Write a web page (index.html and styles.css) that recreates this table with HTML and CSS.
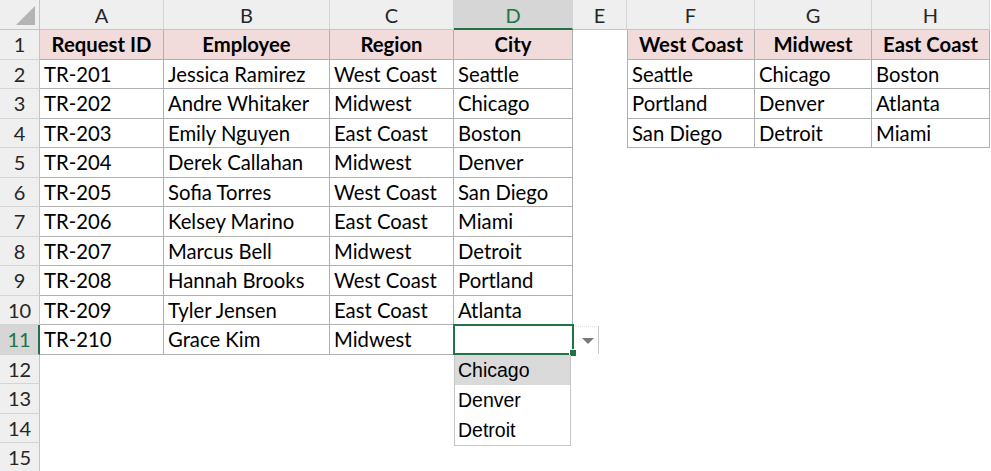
FILE: index.html
```html
<!DOCTYPE html>
<html>
<head>
<meta charset="utf-8">
<link rel="stylesheet" href="styles.css">
</head>
<body>
<div class="sheet">
  <div class="corner"><svg width="40" height="30" viewBox="0 0 40 30"><polygon points="35,6 35,25 16,25" fill="#b4b4b4"/></svg></div>
  <div class="ch">A</div><div class="ch">B</div><div class="ch">C</div><div class="ch ch-sel">D</div><div class="ch">E</div><div class="ch">F</div><div class="ch">G</div><div class="ch">H</div>

  <div class="rh">1</div>
  <div class="cell b hd">Request ID</div><div class="cell b hd">Employee</div><div class="cell b hd">Region</div><div class="cell b hd">City</div><div class="cell"></div>
  <div class="cell b bl hd">West Coast</div><div class="cell b hd">Midwest</div><div class="cell b hd">East Coast</div>

  <div class="rh">2</div>
  <div class="cell b">TR-201</div><div class="cell b">Jessica Ramirez</div><div class="cell b">West Coast</div><div class="cell b">Seattle</div><div class="cell"></div>
  <div class="cell b bl">Seattle</div><div class="cell b">Chicago</div><div class="cell b">Boston</div>

  <div class="rh">3</div>
  <div class="cell b">TR-202</div><div class="cell b">Andre Whitaker</div><div class="cell b">Midwest</div><div class="cell b">Chicago</div><div class="cell"></div>
  <div class="cell b bl">Portland</div><div class="cell b">Denver</div><div class="cell b">Atlanta</div>

  <div class="rh">4</div>
  <div class="cell b">TR-203</div><div class="cell b">Emily Nguyen</div><div class="cell b">East Coast</div><div class="cell b">Boston</div><div class="cell"></div>
  <div class="cell b bl">San Diego</div><div class="cell b">Detroit</div><div class="cell b">Miami</div>

  <div class="rh">5</div>
  <div class="cell b">TR-204</div><div class="cell b">Derek Callahan</div><div class="cell b">Midwest</div><div class="cell b">Denver</div><div class="cell"></div>
  <div class="cell"></div><div class="cell"></div><div class="cell"></div>

  <div class="rh">6</div>
  <div class="cell b">TR-205</div><div class="cell b">Sofia Torres</div><div class="cell b">West Coast</div><div class="cell b">San Diego</div><div class="cell"></div>
  <div class="cell"></div><div class="cell"></div><div class="cell"></div>

  <div class="rh">7</div>
  <div class="cell b">TR-206</div><div class="cell b">Kelsey Marino</div><div class="cell b">East Coast</div><div class="cell b">Miami</div><div class="cell"></div>
  <div class="cell"></div><div class="cell"></div><div class="cell"></div>

  <div class="rh">8</div>
  <div class="cell b">TR-207</div><div class="cell b">Marcus Bell</div><div class="cell b">Midwest</div><div class="cell b">Detroit</div><div class="cell"></div>
  <div class="cell"></div><div class="cell"></div><div class="cell"></div>

  <div class="rh">9</div>
  <div class="cell b">TR-208</div><div class="cell b">Hannah Brooks</div><div class="cell b">West Coast</div><div class="cell b">Portland</div><div class="cell"></div>
  <div class="cell"></div><div class="cell"></div><div class="cell"></div>

  <div class="rh">10</div>
  <div class="cell b">TR-209</div><div class="cell b">Tyler Jensen</div><div class="cell b">East Coast</div><div class="cell b">Atlanta</div><div class="cell"></div>
  <div class="cell"></div><div class="cell"></div><div class="cell"></div>

  <div class="rh rh-sel">11</div>
  <div class="cell b">TR-210</div><div class="cell b">Grace Kim</div><div class="cell b">Midwest</div><div class="cell b"></div><div class="cell"></div>
  <div class="cell"></div><div class="cell"></div><div class="cell"></div>

  <div class="rh">12</div>
  <div class="cell"></div><div class="cell"></div><div class="cell"></div><div class="cell"></div><div class="cell"></div><div class="cell"></div><div class="cell"></div><div class="cell"></div>
  <div class="rh">13</div>
  <div class="cell"></div><div class="cell"></div><div class="cell"></div><div class="cell"></div><div class="cell"></div><div class="cell"></div><div class="cell"></div><div class="cell"></div>
  <div class="rh">14</div>
  <div class="cell"></div><div class="cell"></div><div class="cell"></div><div class="cell"></div><div class="cell"></div><div class="cell"></div><div class="cell"></div><div class="cell"></div>
  <div class="rh">15</div>
  <div class="cell"></div><div class="cell"></div><div class="cell"></div><div class="cell"></div><div class="cell"></div><div class="cell"></div><div class="cell"></div><div class="cell"></div>

  <div class="selection"></div>
  <div class="handle"></div>
  <div class="dd-button"><svg width="12" height="6" viewBox="0 0 12 6"><polygon points="0,0 12,0 6,6" fill="#7a7a7a"/></svg></div>
  <div class="dd-list">
    <div class="dd-item dd-active">Chicago</div>
    <div class="dd-item">Denver</div>
    <div class="dd-item">Detroit</div>
  </div>
</div>
</body>
</html>
```

FILE: styles.css
```css
html, body {
  margin: 0;
  padding: 0;
  background: #fff;
  overflow: hidden;
}
.sheet {
  position: relative;
  display: grid;
  grid-template-columns: 40px 124px 166px 124px 119px 54px 128px 117px 118px;
  grid-template-rows: 30px repeat(15, 29.5px);
  width: 990px;
  font-family: Lato, "Liberation Sans", sans-serif;
  color: #000;
}
.corner {
  background: #efefef;
  border-right: 1px solid #c4c4c4;
  border-bottom: 1px solid #c4c4c4;
  box-sizing: border-box;
  overflow: hidden;
}
.corner svg { display: block; }
.ch {
  background: #efefef;
  border-right: 1px solid #d4d4d4;
  border-bottom: 1px solid #c4c4c4;
  box-sizing: border-box;
  text-align: center;
  font-size: 20px;
  line-height: 30px;
  color: #262626;
}
.ch-sel {
  background: #d6d6d6;
  color: #217346;
  border-bottom: 2px solid #217346;
}
.rh {
  background: #efefef;
  border-right: 1px solid #c4c4c4;
  border-bottom: 1px solid #d4d4d4;
  box-sizing: border-box;
  text-align: center;
  font-size: 20px;
  line-height: 29px;
  color: #262626;
}
.rh-sel {
  background: #d6d6d6;
  color: #217346;
  border-right: 2px solid #217346;
}
.cell {
  box-sizing: border-box;
  padding-left: 4px;
  font-size: 20.3px;
  line-height: 29px;
  white-space: nowrap;
  overflow: hidden;
}
.b {
  border-right: 1px solid #b0b0b0;
  border-bottom: 1px solid #b0b0b0;
}
.bl {
  border-left: 1px solid #b0b0b0;
}
.hd {
  background: #f2dcdb;
  font-weight: 700;
  text-align: center;
  padding-left: 0;
}
.selection {
  position: absolute;
  left: 453px;
  top: 324px;
  width: 121px;
  height: 31px;
  box-sizing: border-box;
  border: 2px solid #217346;
}
.handle {
  position: absolute;
  left: 569px;
  top: 349px;
  width: 6px;
  height: 6px;
  background: #217346;
  border-left: 1px solid #fff;
  border-top: 1px solid #fff;
}
.dd-button {
  position: absolute;
  left: 575px;
  top: 326px;
  width: 23px;
  height: 27px;
  border-right: 1px solid #c8c8c8;
  border-top: 1px dotted #e0e0e0;
  display: flex;
  align-items: center;
  justify-content: center;
}
.dd-button svg { display: block; margin-left: 2px; }
.dd-list {
  position: absolute;
  left: 454px;
  top: 355px;
  width: 117px;
  box-sizing: border-box;
  border: 1px solid #c6c6c6;
  border-top: none;
  background: #fff;
  font-family: "Liberation Sans", Arial, sans-serif;
  font-size: 19.5px;
}
.dd-item {
  height: 30px;
  line-height: 30px;
  padding-left: 3px;
}
.dd-active {
  background: #dadada;
}
```
